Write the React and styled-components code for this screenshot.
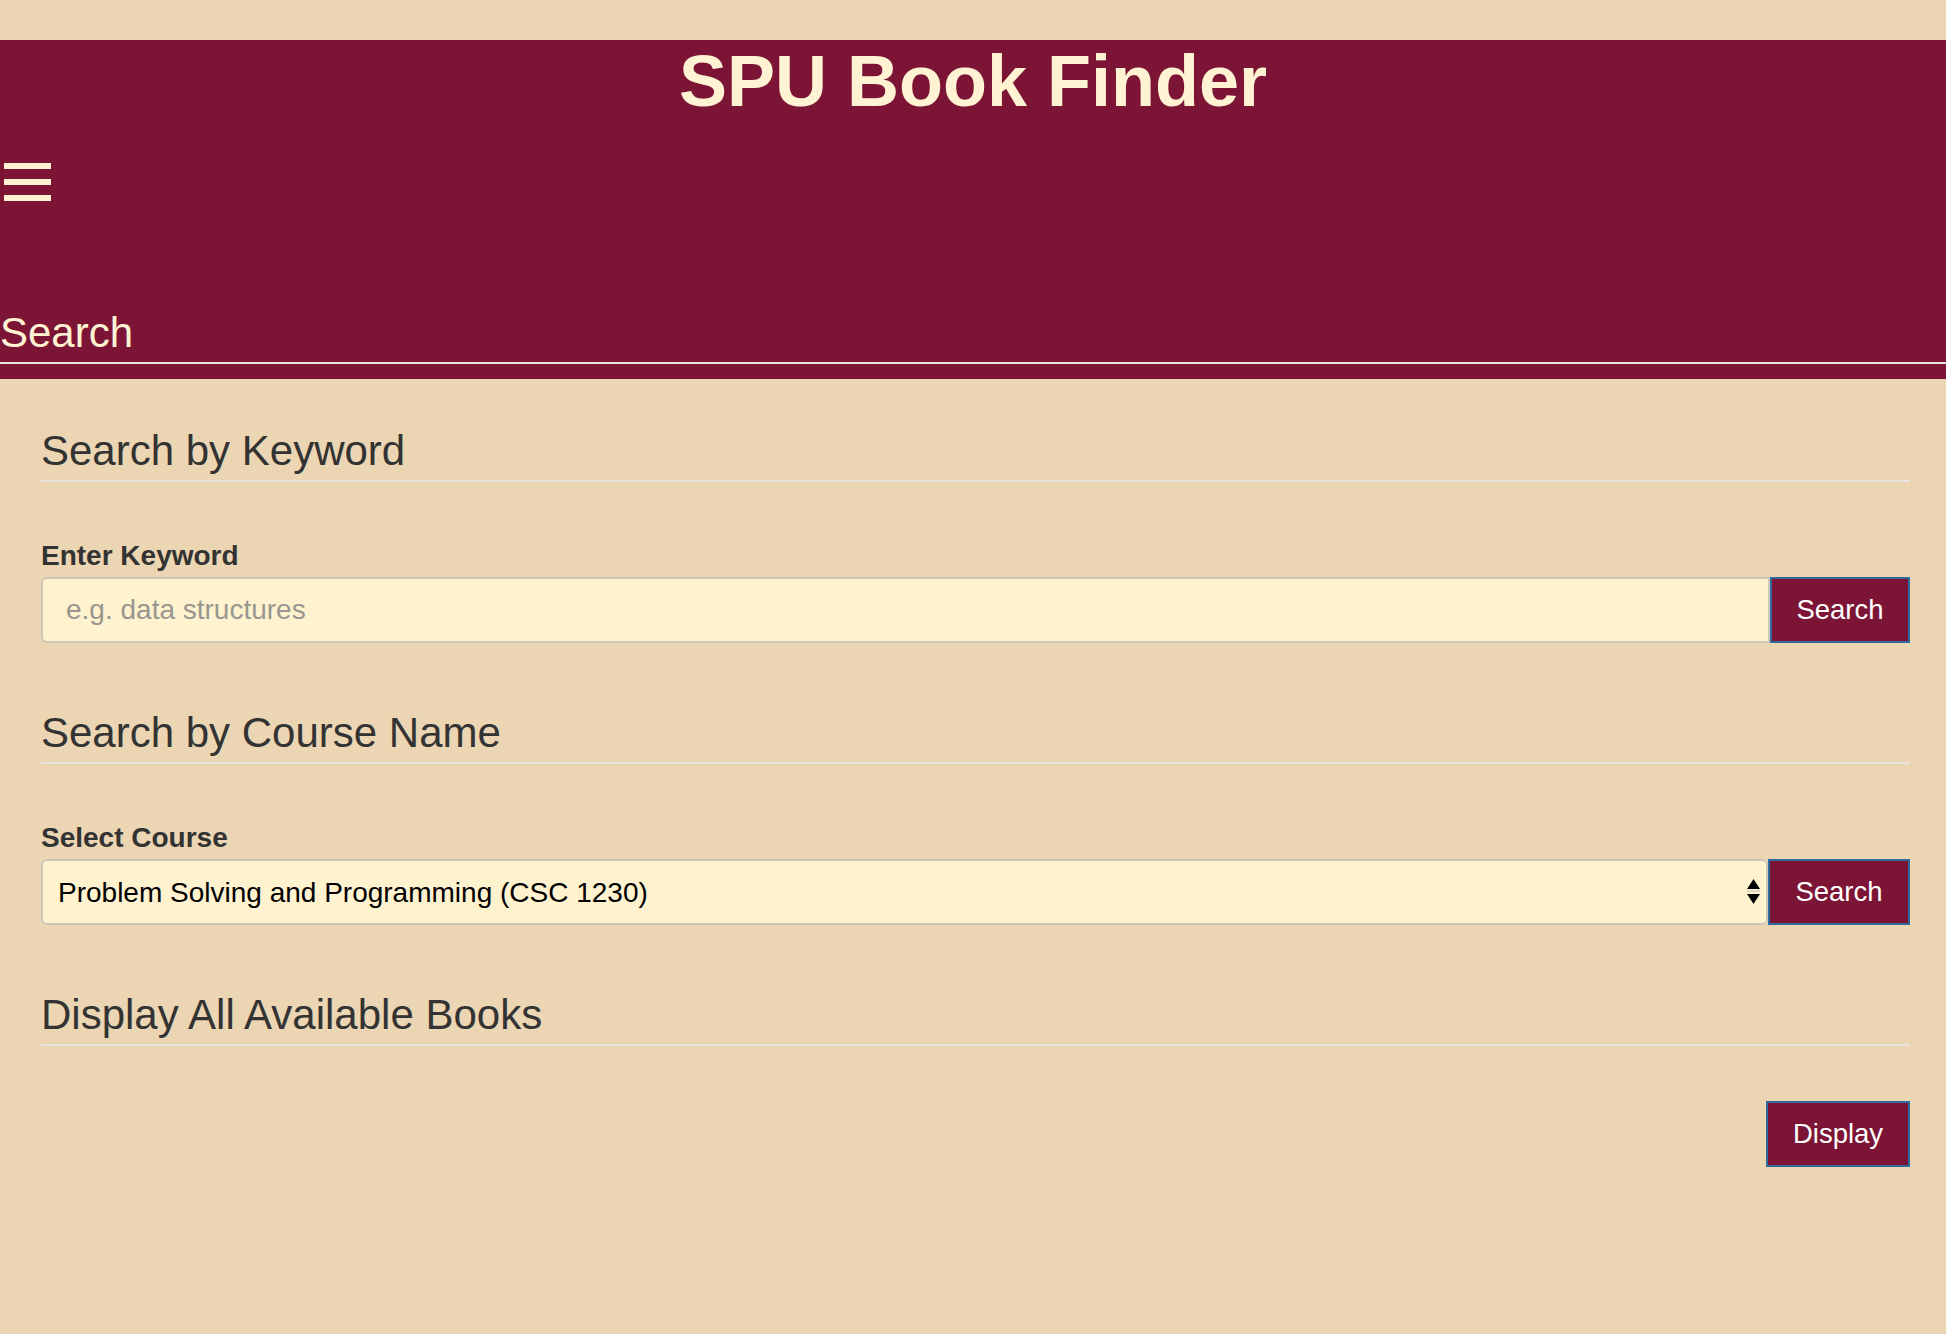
import React from "react";
import styled, { createGlobalStyle } from "styled-components";

const Global = createGlobalStyle`
  html, body { margin: 0; padding: 0; }
  body {
    background: #ebd5b2;
    font-family: "Liberation Sans", Arial, Helvetica, sans-serif;
    min-height: 100vh;
  }
  * { box-sizing: border-box; }
`;

const Page = styled.div`
  min-height: 1334px;
  background: #ebd5b2;
  padding-top: 40px;
`;

const Header = styled.header`
  background: #7c1535;
  padding: 5px 0 15px;
  display: flex;
  flex-direction: column;
`;

const Title = styled.h1`
  margin: 0;
  text-align: center;
  font-size: 72px;
  line-height: 72px;
  font-weight: 700;
  color: #fff3d3;
`;

const MenuButton = styled.button`
  margin: 46px 0 0 4px;
  padding: 0;
  border: 0;
  background: transparent;
  width: 47px;
  display: flex;
  flex-direction: column;
  gap: 10px;
  cursor: pointer;
`;

const Bar = styled.span`
  display: block;
  height: 6px;
  width: 100%;
  background: #fff3d3;
`;

const NavLink = styled.a`
  margin-top: 108px;
  font-size: 42px;
  line-height: 48px;
  color: #fff3d3;
  text-decoration: none;
`;

const NavRule = styled.div`
  margin-top: 5px;
  height: 2px;
  background: #efe3e3;
`;

const Main = styled.main`
  padding: 49px 36px 0 41px;
  display: flex;
  flex-direction: column;
`;

const Section = styled.section`
  display: flex;
  flex-direction: column;
  margin-top: ${(p) => (p.$first ? "0" : "67px")};
`;

const Heading = styled.h3`
  margin: 0;
  font-size: 42px;
  line-height: 46px;
  font-weight: 400;
  color: #333;
`;

const Rule = styled.hr`
  margin: 6px 0 0;
  border: 0;
  height: 2px;
  background: #e8e5df;
`;

const Group = styled.div`
  margin-top: 59px;
  display: flex;
  flex-direction: column;
`;

const Label = styled.label`
  font-size: 28px;
  line-height: 30px;
  font-weight: 700;
  color: #333;
  margin-bottom: 6px;
`;

const InputRow = styled.div`
  display: flex;
  height: 66px;
`;

const TextInput = styled.input`
  flex: 1;
  min-width: 0;
  height: 66px;
  background: #fef2cf;
  border: 2px solid #cdc7ba;
  border-radius: 6px 0 0 6px;
  padding: 0 20px 0 23px;
  font-family: inherit;
  font-size: 28px;
  color: #333;
  outline: none;
  &::placeholder { color: #999690; }
`;

const SelectWrap = styled.div`
  flex: 1;
  position: relative;
  display: flex;
`;

const Select = styled.select`
  flex: 1;
  appearance: none;
  -webkit-appearance: none;
  height: 66px;
  background: #fef2cf;
  border: 2px solid #cdc7ba;
  border-radius: 6px;
  padding: 0 40px 0 15px;
  font-family: inherit;
  font-size: 28px;
  color: #000;
  outline: none;
`;

const Arrows = styled.svg`
  position: absolute;
  right: 8px;
  top: 20px;
  width: 13px;
  height: 25px;
  pointer-events: none;
`;

const Button = styled.button`
  flex: none;
  width: ${(p) => p.$w}px;
  height: 66px;
  background: #7c1535;
  border: 2px solid #2f6a9c;
  color: #fff;
  font-family: inherit;
  font-size: 27.5px;
  padding: 0;
  cursor: pointer;
`;

const ButtonRow = styled.div`
  display: flex;
  justify-content: flex-end;
  margin-top: 55px;
`;

export default function App() {
  return (
    <>
      <Global />
      <Page>
        <Header>
          <Title>SPU Book Finder</Title>
          <MenuButton aria-label="Menu">
            <Bar />
            <Bar />
            <Bar />
          </MenuButton>
          <NavLink href="#">Search</NavLink>
          <NavRule />
        </Header>
        <Main>
          <Section $first>
            <Heading>Search by Keyword</Heading>
            <Rule />
            <Group>
              <Label htmlFor="kw">Enter Keyword</Label>
              <InputRow>
                <TextInput id="kw" placeholder="e.g. data structures" />
                <Button $w={140}>Search</Button>
              </InputRow>
            </Group>
          </Section>
          <Section>
            <Heading>Search by Course Name</Heading>
            <Rule />
            <Group>
              <Label htmlFor="course">Select Course</Label>
              <InputRow>
                <SelectWrap>
                  <Select id="course" defaultValue="csc1230">
                    <option value="csc1230">Problem Solving and Programming (CSC 1230)</option>
                  </Select>
                  <Arrows viewBox="0 0 13 25">
                    <path d="M6.5 0 L13 10 L0 10 Z" fill="#000" />
                    <rect x="0" y="11.5" width="13" height="1" fill="#bbb" />
                    <path d="M0 15 L13 15 L6.5 25 Z" fill="#000" />
                  </Arrows>
                </SelectWrap>
                <Button $w={142}>Search</Button>
              </InputRow>
            </Group>
          </Section>
          <Section>
            <Heading>Display All Available Books</Heading>
            <Rule />
            <ButtonRow>
              <Button $w={144}>Display</Button>
            </ButtonRow>
          </Section>
        </Main>
      </Page>
    </>
  );
}
